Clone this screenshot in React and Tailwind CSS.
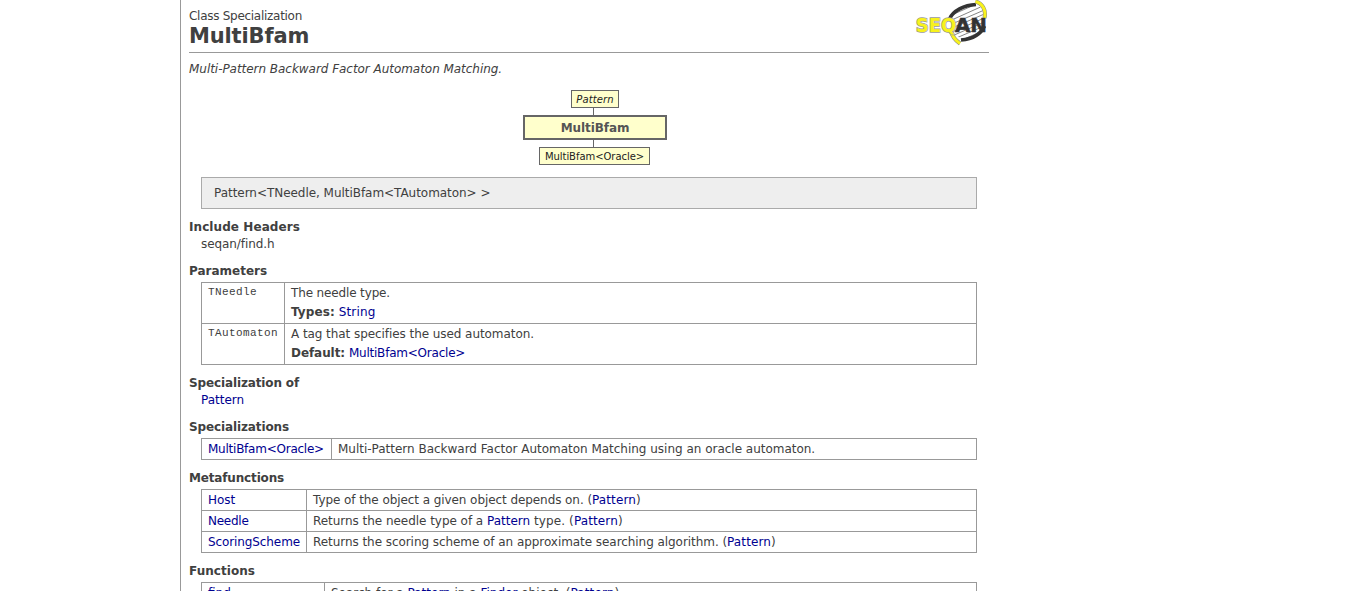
function Heading({ className = '', children }) {
  return (
    <h2 className={`h-[17px] whitespace-nowrap text-[12px] leading-[17px] font-bold ${className}`}>
      {children}
    </h2>
  );
}

function A({ className = '', children }) {
  return <a className={`text-[#000090] ${className}`}>{children}</a>;
}

function Table({ columns, children }) {
  return (
    <div className={`mt-0.5 ml-3 grid w-[776px] border-t border-l border-[#999] ${columns}`}>
      {children}
    </div>
  );
}

function Cell({ children }) {
  return (
    <div className="border-r border-b border-[#999] pl-1.5 text-[12px] leading-5 whitespace-nowrap">
      {children}
    </div>
  );
}

function TallCell({ children }) {
  return (
    <div className="h-[41px] border-r border-b border-[#999] pt-px pl-1.5 text-[12px] leading-[19px] whitespace-nowrap">
      {children}
    </div>
  );
}

function CodeCell({ children }) {
  return (
    <div className="h-[41px] border-r border-b border-[#999] pt-px pl-1.5 font-['Liberation_Mono',monospace] text-[11px] leading-[17px] tracking-[0.4px] whitespace-nowrap">
      {children}
    </div>
  );
}

function Logo() {
  return (
    <svg className="h-[46px] w-[74px]" viewBox="0 0 74 46">
      <defs>
        <clipPath id="body">
          <path d="M62 5C51 5 37 11 36 21L39 34L48 40C62 38 70 28 69 16C69 11 67 8 62 5Z" />
        </clipPath>
      </defs>
      <g clipPath="url(#body)" stroke="#666" strokeWidth="0.8">
        <path d="M30 18L66 2M30 23L70 5M30 27L74 8M30 31L74 12M30 35L74 16M30 39L74 20M32 42L74 24M36 45L74 28M42 47L74 32" />
      </g>
      <path d="M34.5 19C38 11 49 5 61 4.500" fill="none" stroke="#333" strokeWidth="3.600" />
      <path d="M46 40C57 39 66 34 69.500 26" fill="none" stroke="#333" strokeWidth="3.600" />
      <path d="M60.500 1.500C67 3 71.500 10 69.500 18" fill="none" stroke="#888" strokeWidth="4" />
      <path d="M60.500 1.500C67 3 71.500 10 69.500 18" fill="none" stroke="#f8f21c" strokeWidth="3" />
      <path d="M36 31C37 36 40 40 45 43.500" fill="none" stroke="#888" strokeWidth="4" />
      <path d="M36 31C37 36 40 40 45 43.500" fill="none" stroke="#f8f21c" strokeWidth="3" />
      <text x="0.8" y="32" fontFamily="DejaVu Sans, sans-serif" fontWeight="bold" fontSize="19.500" textLength="40.5" lengthAdjust="spacingAndGlyphs" fill="#f8f21c" stroke="#999" strokeWidth="1.5" paintOrder="stroke">SEQ</text>
      <text x="40" y="32" fontFamily="DejaVu Sans, sans-serif" fontWeight="bold" fontSize="19.500" textLength="32" lengthAdjust="spacingAndGlyphs" fill="#333" stroke="#333" strokeWidth="0.5">AN</text>
    </svg>
  );
}

export default function App() {
  return (
    <div className="h-[591px] overflow-hidden bg-white font-['DejaVu_Sans',sans-serif] text-[#404040]">
      <main className="ml-[180px] h-[700px] w-[809px] border-l border-[#999] pl-2">
        <header className="flex h-[53px] justify-between border-b border-[#999]">
          <div className="pt-2 whitespace-nowrap">
            <div className="text-[12px] leading-4 tracking-[-0.28px]">Class Specialization</div>
            <h1 className="text-[21px] leading-6 font-bold tracking-[-0.15px]">MultiBfam</h1>
          </div>
          <Logo />
        </header>
        <p className="mt-2 text-[12px] leading-4 tracking-[-0.04px] italic">
          Multi-Pattern Backward Factor Automaton Matching.
        </p>

        <div className="mt-[13px] ml-3 flex w-[788px] flex-col items-center text-[#222]">
          <div className="flex h-[18px] w-12 items-center justify-center border border-[#666] bg-[#ffffcc] text-[10px] tracking-[0.1px] italic">
            Pattern
          </div>
          <div className="mr-[3px] h-[7px] w-px bg-[#666]" />
          <div className="flex h-[25px] w-36 items-center justify-center border-2 border-[#666] bg-[#ffffcc] text-[12px] font-bold tracking-[-0.08px] text-[#555]">
            MultiBfam
          </div>
          <div className="mr-[3px] h-[7px] w-px bg-[#666]" />
          <div className="mr-px flex h-[18px] w-[111px] items-center justify-center border border-[#666] bg-[#ffffcc] text-[10px] tracking-[-0.05px]">
            MultiBfam&lt;Oracle&gt;
          </div>
        </div>

        <div className="mt-3 ml-3 h-8 w-[776px] border border-[#aaa] bg-[#eee] pl-3 text-[12px] leading-[30px] tracking-[-0.04px]">
          Pattern&lt;TNeedle, MultiBfam&lt;TAutomaton&gt; &gt;
        </div>

        <Heading className="mt-[10px] tracking-[0.08px]">Include Headers</Heading>
        <div className="pl-3 text-[12px] leading-[17px] tracking-[-0.08px]">seqan/find.h</div>

        <Heading className="mt-[10px]">Parameters</Heading>
        <Table columns="grid-cols-[83px_692px]">
          <CodeCell>TNeedle</CodeCell>
          <TallCell>
            <div className="tracking-[-0.14px]">The needle type.</div>
            <div>
              <b className="tracking-[0.1px]">Types:</b> <A className="tracking-[0.16px]">String</A>
            </div>
          </TallCell>
          <CodeCell>TAutomaton</CodeCell>
          <TallCell>
            <div className="tracking-[-0.065px]">A tag that specifies the used automaton.</div>
            <div>
              <b className="tracking-[-0.07px]">Default:</b>{' '}
              <A className="tracking-[-0.22px]">MultiBfam&lt;Oracle&gt;</A>
            </div>
          </TallCell>
        </Table>

        <Heading className="mt-[10px] tracking-[-0.13px]">Specialization of</Heading>
        <div className="pl-3 text-[12px] leading-[17px]">
          <A>Pattern</A>
        </div>

        <Heading className="mt-[10px] tracking-[-0.12px]">Specializations</Heading>
        <Table columns="grid-cols-[130px_645px]">
          <Cell>
            <A className="tracking-[-0.24px]">MultiBfam&lt;Oracle&gt;</A>
          </Cell>
          <Cell>
            <span className="tracking-[-0.015px]">
              Multi-Pattern Backward Factor Automaton Matching using an oracle automaton.
            </span>
          </Cell>
        </Table>

        <Heading className="mt-[10px] tracking-[-0.16px]">Metafunctions</Heading>
        <Table columns="grid-cols-[105px_670px]">
          <Cell><A>Host</A></Cell>
          <Cell>
            <span className="tracking-[-0.073px]">Type of the object a given object depends on. (</span>
            <A className="tracking-[0.12px]">Pattern</A>)
          </Cell>
          <Cell><A className="tracking-[-0.25px]">Needle</A></Cell>
          <Cell>
            <span className="tracking-[-0.04px]">Returns the needle type of a </span>
            <A>Pattern</A> <span className="tracking-[0.12px]">type. (</span>
            <A className="tracking-[0.12px]">Pattern</A>)
          </Cell>
          <Cell><A className="tracking-[-0.1px]">ScoringScheme</A></Cell>
          <Cell>
            <span className="tracking-[-0.057px]">Returns the scoring scheme of an approximate searching algorithm. (</span>
            <A className="tracking-[0.12px]">Pattern</A>)
          </Cell>
        </Table>

        <Heading className="mt-[10px] tracking-[0.04px]">Functions</Heading>
        <Table columns="grid-cols-[123px_652px]">
          <Cell><A>find</A></Cell>
          <Cell>
            Search for a <A>Pattern</A> in a <A>Finder</A> object. (<A className="tracking-[0.12px]">Pattern</A>)
          </Cell>
        </Table>
      </main>
    </div>
  );
}
